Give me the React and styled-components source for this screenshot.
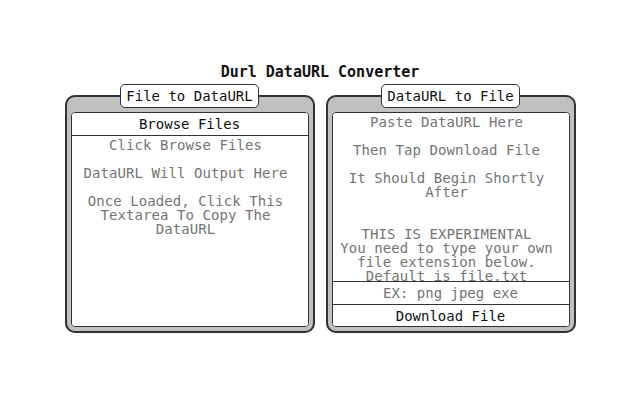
import React from 'react';
import styled, { createGlobalStyle } from 'styled-components';

const GlobalStyle = createGlobalStyle`
    body {
        margin: 0;
        background: #ffffff;
        font-family: "DejaVu Sans Mono", monospace;
        color: #111;
    }
`;

const Page = styled.div`
    display: flex;
    flex-direction: column;
    align-items: center;
    padding-top: 63px;
`;

const Title = styled.h1`
    margin: 0 0 3px;
    font-size: 15px;
    line-height: 18px;
    font-weight: bold;
    color: #111;
`;

const Panels = styled.div`
    display: flex;
    gap: 11px;
`;

const Panel = styled.fieldset`
    box-sizing: border-box;
    width: 250px;
    min-width: 0;
    margin: 0;
    padding: 4px;
    background: #c0c0c0;
    border: 2px solid #333;
    border-radius: 10px;
`;

const Legend = styled.legend`
    margin: 0 auto;
    padding: 0 5px;
    height: 24px;
    box-sizing: border-box;
    line-height: 22px;
    font-size: 14px;
    background: #fff;
    border: 1px solid #333;
    border-radius: 5px;
`;

const Inner = styled.div`
    box-sizing: border-box;
    height: 215px;
    display: flex;
    flex-direction: column;
    background: #fff;
    border: 1px solid #333;
    border-radius: 4px;
    overflow: hidden;
`;

const Button = styled.button`
    flex: none;
    height: ${p => p.$h}px;
    padding: 0;
    margin: 0;
    background: #fff;
    border: none;
    border-top: ${p => (p.$top ? '1px solid #333' : 'none')};
    border-bottom: ${p => (p.$bottom ? '1px solid #333' : 'none')};
    font-family: "DejaVu Sans Mono", monospace;
    font-size: 14px;
    color: #111;
    cursor: pointer;
`;

const Output = styled.textarea`
    flex: 1;
    min-height: 0;
    margin: 0;
    padding: 2px 10px 2px 2px;
    border: none;
    outline: none;
    resize: none;
    overflow: hidden;
    text-align: center;
    font-family: "DejaVu Sans Mono", monospace;
    font-size: 14px;
    line-height: 14px;
    letter-spacing: 0.08px;
    &::placeholder {
        color: #757575;
    }
`;

const ExtInput = styled.input`
    flex: none;
    box-sizing: border-box;
    height: 23px;
    margin: 0;
    padding: 0;
    border: none;
    border-top: 1px solid #333;
    outline: none;
    text-align: center;
    font-family: "DejaVu Sans Mono", monospace;
    font-size: 14px;
    &::placeholder {
        color: #757575;
    }
`;

const leftText =
    'Click Browse Files\n\nDataURL Will Output Here\n\nOnce Loaded, Click This Textarea To Copy The DataURL';

const rightText =
    'Paste DataURL Here\n\nThen Tap Download File\n\nIt Should Begin Shortly After\n\n\nTHIS IS EXPERIMENTAL\nYou need to type your own file extension below.\nDefault is file.txt';

const App = () => {
    return (
        <>
            <GlobalStyle />
            <Page>
                <Title>Durl DataURL Converter</Title>
                <Panels>
                    <Panel>
                        <Legend>File to DataURL</Legend>
                        <Inner>
                            <Button $h={23} $bottom>Browse Files</Button>
                            <Output readOnly placeholder={leftText} />
                        </Inner>
                    </Panel>
                    <Panel>
                        <Legend>DataURL to File</Legend>
                        <Inner>
                            <Output placeholder={rightText} />
                            <ExtInput placeholder="EX: png jpeg exe" />
                            <Button $h={22} $top>Download File</Button>
                        </Inner>
                    </Panel>
                </Panels>
            </Page>
        </>
    );
};

export default App;
